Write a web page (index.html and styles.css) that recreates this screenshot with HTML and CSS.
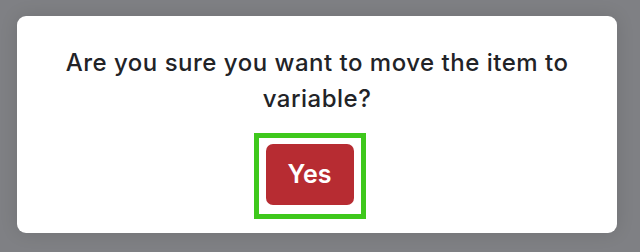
FILE: index.html
```html
<!DOCTYPE html>
<html lang="en">
<head>
<meta charset="utf-8">
<title>Confirm</title>
<link rel="stylesheet" href="styles.css">
</head>
<body>
<div class="overlay">
  <div class="modal">
    <p class="message">Are you sure you want to move the item to variable?</p>
    <div class="focus-ring">
      <button class="btn-yes" type="button">Yes</button>
    </div>
  </div>
</div>
</body>
</html>
```

FILE: styles.css
```css
html, body {
  margin: 0;
  padding: 0;
  width: 640px;
  height: 252px;
  overflow: hidden;
}
body {
  background: #7f8084;
  font-family: "Inter", "Noto Sans", sans-serif;
}
.overlay {
  padding: 16px 23px 19px 17px;
  display: flex;
}
.modal {
  width: 600px;
  height: 217px;
  box-sizing: border-box;
  background: #ffffff;
  border-radius: 9px;
  box-shadow: 0 0 18px rgba(0, 0, 0, 0.12);
  padding: 29px 30px 14px;
  display: flex;
  flex-direction: column;
  align-items: center;
}
.message {
  margin: 0;
  font-size: 24px;
  line-height: 36px;
  font-weight: 500;
  letter-spacing: 0.5px;
  color: #222327;
  text-align: center;
}
.focus-ring {
  margin-top: 16px;
  border: 5px solid #3ec81c;
  padding: 6px 7px 9px;
  margin-left: -15px;
}
.btn-yes {
  display: block;
  width: 88px;
  height: 61px;
  border: none;
  border-radius: 7px;
  background: #b72c32;
  color: #ffffff;
  font-family: "Inter", "Noto Sans", sans-serif;
  font-size: 25px;
  font-weight: 600;
  padding: 0 0 2px;
}
```
